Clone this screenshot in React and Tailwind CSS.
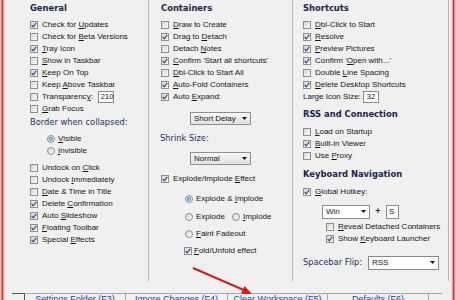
const sans = "font-['Liberation_Sans',Arial,sans-serif] text-[8px] text-[#151515]";
const verd = "font-['DejaVu_Sans',Verdana,sans-serif] text-[8.3px] text-[#233063]";

function Box({ on }) {
  return (
    <span className="relative w-[8px] h-[8px] shrink-0 border border-[#8e8f8f] bg-linear-to-br from-[#d6d6d6] to-[#fbfbfb]">
      {on && (
        <svg className="absolute inset-0" width="6" height="6" viewBox="0 0 6 6">
          <path d="M0.7 3 L2.3 4.8 L5.3 0.8" fill="none" stroke="#34488a" strokeWidth="1.2" />
        </svg>
      )}
    </span>
  );
}

function Dot({ on }) {
  return (
    <span className="flex items-center justify-center w-[8px] h-[8px] shrink-0 rounded-full border border-[#8e8f8f] bg-linear-to-br from-[#d6d6d6] to-[#fbfbfb]">
      {on && <span className="w-[4px] h-[4px] rounded-full bg-radial from-[#9fdcff] to-[#1b66b4]" />}
    </span>
  );
}

function Check({ on, children, className = "" }) {
  return (
    <div className={`flex items-center gap-[4px] h-[12px] ${className}`}>
      <Box on={on} />
      <span className="whitespace-nowrap leading-[12px]">{children}</span>
    </div>
  );
}

function Radio({ on, children, className = "" }) {
  return (
    <div className={`flex items-center gap-[3px] h-[12px] ${className}`}>
      <Dot on={on} />
      <span className="whitespace-nowrap leading-[12px]">{children}</span>
    </div>
  );
}

function Heading({ children, className = "" }) {
  return (
    <div className={`font-['DejaVu_Sans',Verdana,sans-serif] font-bold text-[8.4px] text-[#1b244f] h-[10px] leading-[10px] whitespace-nowrap ${className}`}>
      {children}
    </div>
  );
}

function Arrow() {
  return (
    <svg width="5" height="3" viewBox="0 0 5 3" className="shrink-0">
      <path d="M0 0 H5 L2.5 3 Z" fill="#111" />
    </svg>
  );
}

function Select({ value, className }) {
  return (
    <div className={`flex items-center justify-between border px-[3px] ${className}`}>
      <span className="leading-none">{value}</span>
      <Arrow />
    </div>
  );
}

function Input({ value, className }) {
  return (
    <div className={`flex items-center border border-[#8a8a8a] bg-white px-[2px] text-[7.5px] leading-none ${className}`}>
      {value}
    </div>
  );
}

export default function App() {
  return (
    <div className={`relative w-[456px] h-[300px] overflow-hidden bg-[#f0f0f0] flex ${sans}`}>
      {/* window frame left */}
      <div className="flex h-full shrink-0">
        <div className="w-[1px] bg-[#eebcbc]" />
        <div className="w-[1px] bg-[#dc8a8a]" />
        <div className="w-[1px] bg-[#c93b3b]" />
        <div className="w-[1px] bg-[#e7a3a3]" />
        <div className="w-[1px] bg-[#f3d5d5]" />
      </div>

      <div className="flex flex-col">
        <div className="flex h-[281px] shrink-0">
          {/* General */}
          <div className="w-[144px] h-full border-r border-[#b9b9b9] pl-[25px] pt-[3px]">
            <Heading>General</Heading>
            <div className="mt-[6px]">
              <Check on>Check for <u>U</u>pdates</Check>
              <Check>Check for <u>B</u>eta Versions</Check>
              <Check on><u>T</u>ray Icon</Check>
              <Check><u>S</u>how in Taskbar</Check>
              <Check on><u>K</u>eep On Top</Check>
              <Check>Keep <u>A</u>bove Taskbar</Check>
              <div className="flex items-center h-[12px]">
                <Check>Transparenc<u>y</u>:</Check>
                <Input value="210" className="ml-[5px] w-[16px] h-[12px]" />
              </div>
              <Check><u>G</u>rab Focus</Check>
            </div>
            <div className={`mt-[1px] h-[12px] leading-[12px] whitespace-nowrap ${verd}`}>Border when collapsed:</div>
            <div className="mt-[5px] pl-[17px]">
              <Radio on><u>V</u>isible</Radio>
              <Radio><u>I</u>nvisible</Radio>
            </div>
            <div className="mt-[5px] flex flex-col">
              <Check className="h-[11.8px]">Undock on <u>C</u>lick</Check>
              <Check className="h-[11.8px]">Undock <u>I</u>mmediately</Check>
              <Check className="h-[11.8px]"><u>D</u>ate &amp; Time in Title</Check>
              <Check on className="h-[11.8px]">Delete <u>C</u>onfirmation</Check>
              <Check on className="h-[11.8px]">Auto <u>S</u>lideshow</Check>
              <Check on className="h-[11.8px]"><u>F</u>loating Toolbar</Check>
              <Check on className="h-[11.8px]">Special <u>E</u>ffects</Check>
            </div>
          </div>

          {/* Containers */}
          <div className="w-[144px] h-full border-r border-[#b9b9b9] pl-[12px] pt-[3px]">
            <Heading>Containers</Heading>
            <div className="mt-[6px]">
              <Check><u>D</u>raw to Create</Check>
              <Check on>Drag to <u>D</u>etach</Check>
              <Check>Detach <u>N</u>otes</Check>
              <Check on><u>C</u>onfirm 'Start all shortcuts'</Check>
              <Check><u>D</u>bl-Click to Start All</Check>
              <Check on><u>A</u>uto-Fold Containers</Check>
              <Check on>Auto <u>E</u>xpand:</Check>
            </div>
            <Select value="Short Delay" className="mt-[9px] ml-[29px] w-[61px] h-[13px] border-[#8f8f8f] bg-linear-to-b from-[#f6f6f6] to-[#e2e2e2]" />
            <div className={`mt-[7px] -ml-[1px] h-[12px] leading-[12px] ${verd}`}>Shrink Size:</div>
            <Select value="Normal" className="mt-[8px] ml-[29px] w-[61px] h-[13px] border-[#8f8f8f] bg-linear-to-b from-[#f6f6f6] to-[#e2e2e2]" />
            <Check on className="mt-[8px]">Explode/Implode <u>E</u>ffect</Check>
            <Radio on className="mt-[8px] ml-[24px]">Explode &amp; <u>I</u>mplode</Radio>
            <div className="mt-[5.5px] ml-[24px] flex">
              <Radio className="w-[47px]">Explode</Radio>
              <Radio><u>I</u>mplode</Radio>
            </div>
            <Radio className="mt-[5.5px] ml-[24px]"><u>F</u>aint Fadeout</Radio>
            <div className="mt-[4.5px] ml-[23px] flex items-center gap-[2px] h-[12px]">
              <Box on />
              <span className="whitespace-nowrap"><u>F</u>old/Unfold effect</span>
            </div>
          </div>

          {/* Shortcuts */}
          <div className="w-[156px] h-full border-r border-[#b9b9b9] pl-[10px] pt-[3px]">
            <Heading>Shortcuts</Heading>
            <div className="mt-[6px]">
              <Check><u>D</u>bl-Click to Start</Check>
              <Check on><u>R</u>esolve</Check>
              <Check on><u>P</u>review Pictures</Check>
              <Check on>Confirm '<u>O</u>pen with...'</Check>
              <Check>Double <u>L</u>ine Spacing</Check>
              <Check on><u>D</u>elete Desktop Shortcuts</Check>
              <div className="flex items-center h-[12px]">
                <span className="w-[60px] whitespace-nowrap">Large Icon Size:</span>
                <Input value="32" className="w-[16px] h-[12px] justify-center" />
              </div>
            </div>
            <Heading className="mt-[6px]">RSS and Connection</Heading>
            <div className="mt-[6.7px]">
              <Check><u>L</u>oad on Startup</Check>
              <Check on><u>B</u>uilt-in Viewer</Check>
              <Check>Use <u>P</u>roxy</Check>
            </div>
            <Heading className="mt-[7.3px]">Keyboard Navigation</Heading>
            <Check on className="mt-[6.7px]"><u>G</u>lobal Hotkey:</Check>
            <div className="mt-[7.3px] ml-[19px] flex items-center h-[14px]">
              <Select value="Win" className="w-[48px] h-[14px] border-[#8a8a8a] bg-white" />
              <span className="w-[16px] text-center text-[9px] font-bold text-[#333]">+</span>
              <Input value="S" className="w-[13px] h-[14px] text-[8px]" />
            </div>
            <Check className="mt-[1.7px] ml-[23px]"><u>R</u>eveal Detached Containers</Check>
            <Check on className="ml-[23px] h-[12.3px]">Show <u>K</u>eyboard Launcher</Check>
            <div className="mt-[11px] flex items-center h-[14px]">
              <span className={`w-[65px] whitespace-nowrap ${verd}`}>Spacebar Flip:</span>
              <Select value="RSS" className="w-[71px] h-[14px] border-[#8a8a8a] bg-white" />
            </div>
          </div>
        </div>

        {/* bottom button strip, cut off by the window edge */}
        <div className="mt-[12px] ml-[7px] flex h-[20px] shrink-0 text-[9px] leading-[10px] text-[#2b3cc4]">
          <div className="w-[13px] border-t border-r border-[#555]" />
          <div className="w-[101px] border-t border-r border-[#a8a8a8] text-center">Settings Folder (F3)</div>
          <div className="w-[102px] border-t border-r border-[#a8a8a8] text-center">Ignore Changes (F4)</div>
          <div className="w-[100px] border-t border-r border-[#a8a8a8] text-center">Clear Workspace (F5)</div>
          <div className="w-[101px] border-t border-r border-[#a8a8a8] text-center">Defaults (F6)</div>
          <div className="w-[13px] border-t border-[#a8a8a8]" />
        </div>
      </div>

      {/* window frame right */}
      <div className="flex h-full shrink-0 ml-[2px]">
        <div className="w-[1px] bg-[#f3d5d5]" />
        <div className="w-[1px] bg-[#e7a3a3]" />
        <div className="w-[1px] bg-[#c93b3b]" />
        <div className="w-[1px] bg-[#dc8a8a]" />
        <div className="w-[1px] bg-[#eebcbc]" />
      </div>

      {/* red annotation arrow */}
      <svg className="absolute inset-0 pointer-events-none" width="456" height="300">
        <line x1="193" y1="268" x2="246" y2="291" stroke="#d41c1c" strokeWidth="2" />
        <polygon points="252,294 241,293.8 244.6,286" fill="#d41c1c" />
      </svg>
    </div>
  );
}
